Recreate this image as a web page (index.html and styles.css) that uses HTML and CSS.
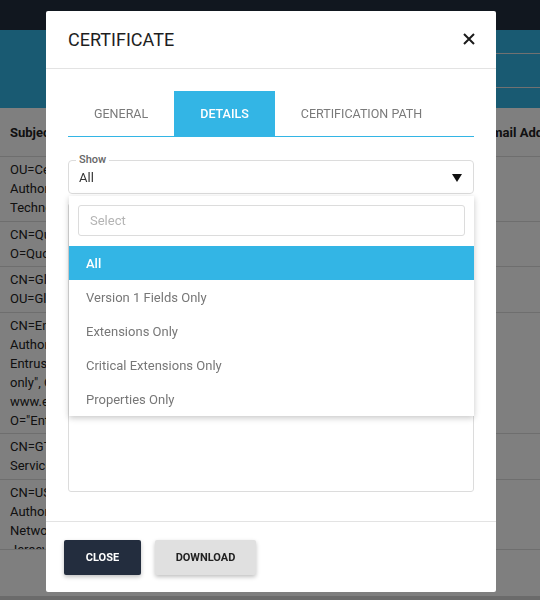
FILE: index.html
```html
<!DOCTYPE html>
<html lang="en">
<head>
	<meta charset="UTF-8">
	<meta name="viewport" content="width=device-width, initial-scale=1.0">
	<title>Certificates</title>
	<link rel="stylesheet" href="styles.css">
</head>
<body>
	<header class="topbar"></header>

	<section class="banner">
		<div class="banner-search"></div>
	</section>

	<div class="grid-wrap">
		<table class="cert-table">
			<colgroup>
				<col class="col-subject">
				<col class="col-issuer">
				<col class="col-expires">
				<col class="col-email">
			</colgroup>
			<thead>
				<tr>
					<th>Subject</th>
					<th>Issuer</th>
					<th>Expires</th>
					<th>Email Address</th>
				</tr>
			</thead>
			<tbody>
				<tr>
					<td>OU=Certum Certification<br>Authority, O=Unizeto<br>Technologies S.A., C=PL</td>
					<td>Certum CA</td>
					<td>2029-06-11</td>
					<td></td>
				</tr>
				<tr>
					<td>CN=QuoVadis Root CA 2,<br>O=QuoVadis Limited, C=BM</td>
					<td>QuoVadis</td>
					<td>2031-11-24</td>
					<td></td>
				</tr>
				<tr>
					<td>CN=GlobalSign, O=GlobalSign,<br>OU=GlobalSign Root CA - R3</td>
					<td>GlobalSign</td>
					<td>2029-03-18</td>
					<td></td>
				</tr>
				<tr>
					<td>CN=Entrust Root Certification<br>Authority - G2, OU="(c) 2009<br>Entrust, Inc. - for authorized use<br>only", OU="See<br>www.entrust.net/legal-terms",<br>O="Entrust, Inc.", C=US</td>
					<td>Entrust</td>
					<td>2030-12-07</td>
					<td></td>
				</tr>
				<tr>
					<td>CN=GTS Root R1, O=Google Trust<br>Services LLC, C=US</td>
					<td>Google Trust</td>
					<td>2036-06-22</td>
					<td></td>
				</tr>
				<tr>
					<td>CN=USERTrust RSA Certification<br>Authority, O=The USERTRUST<br>Network, L=Jersey City, ST=New<br>Jersey, C=US</td>
					<td>USERTrust</td>
					<td>2038-01-18</td>
					<td></td>
				</tr>
			</tbody>
		</table>
	</div>
	<div class="grid-foot"></div>
	<div class="hscroll"></div>

	<div class="backdrop"></div>

	<div class="modal">
		<div class="modal-head">
			<h2 class="modal-title">CERTIFICATE</h2>
			<button class="modal-close" type="button" aria-label="Close">
				<svg viewBox="0 0 12 12" width="12" height="12">
					<path d="M1 1 L11 11 M11 1 L1 11" stroke="#1b1b1b" stroke-width="2" fill="none"/>
				</svg>
			</button>
		</div>

		<div class="modal-body">
			<div class="tabs">
				<div class="tab">GENERAL</div>
				<div class="tab active">DETAILS</div>
				<div class="tab">CERTIFICATION PATH</div>
			</div>

			<div class="field">
				<span class="field-label">Show</span>
				<span class="field-value">All</span>
				<svg class="field-arrow" viewBox="0 0 10 8" width="10" height="8">
					<polygon points="0,0 10,0 5,8" fill="#111"/>
				</svg>
			</div>

			<div class="details-box"></div>
		</div>

		<div class="modal-foot">
			<button class="btn btn-dark" type="button">CLOSE</button>
			<button class="btn btn-light" type="button">DOWNLOAD</button>
		</div>

		<!-- open dropdown of the Show select -->
		<div class="dropdown">
			<div class="dropdown-search">Select</div>
			<ul class="options">
				<li class="option selected">All</li>
				<li class="option">Version 1 Fields Only</li>
				<li class="option">Extensions Only</li>
				<li class="option">Critical Extensions Only</li>
				<li class="option">Properties Only</li>
			</ul>
		</div>
	</div>
</body>
</html>
```

FILE: styles.css
```css
body{
	margin: 0;
	font-family: Roboto, "Liberation Sans", Arial, sans-serif;
	background: #fff;
	color: #222;
	overflow: hidden;
}

.topbar{
	height: 30px;
	background-color: #232f3e;
}

.banner{
	height: 78px;
	background-color: #33b5e5;
	display: flex;
	justify-content: flex-end;
	box-sizing: border-box;
	padding-top: 23px;
}

.banner-search{
	width: 230px;
	height: 35px;
	box-sizing: border-box;
	border-top: 1px solid #e2e2e2;
	border-bottom: 1px solid #e2e2e2;
}

.grid-wrap{
	height: 441px;
	overflow: hidden;
}

.cert-table{
	width: 640px;
	table-layout: fixed;
	border-collapse: collapse;
	font-size: 13px;
	line-height: 19px;
}

.col-subject{ width: 160px; }
.col-issuer{ width: 150px; }
.col-expires{ width: 164px; }
.col-email{ width: 166px; }

.cert-table th{
	height: 48px;
	padding: 0 10px;
	text-align: left;
	font-weight: bold;
	white-space: nowrap;
	border-bottom: 1px solid #dcdcdc;
}

.cert-table td{
	padding: 3px 10px 3.5px;
	vertical-align: top;
	white-space: nowrap;
	overflow: hidden;
	border-bottom: 1px solid #dcdcdc;
}

.grid-foot{
	height: 47px;
	border-top: 1px solid #dcdcdc;
	box-sizing: border-box;
}

.hscroll{
	height: 4px;
	background-color: #d6d6d6;
}

.backdrop{
	position: fixed;
	inset: 0;
	background: rgba(0, 0, 0, 0.5);
}

/* modal */
.modal{
	position: fixed;
	left: 46px;
	top: 11px;
	width: 450px;
	height: 581px;
	background: #fff;
	border-radius: 2px;
	display: flex;
	flex-direction: column;
}

.modal-head{
	height: 58px;
	box-sizing: border-box;
	border-bottom: 1px solid #e3e3e3;
	display: flex;
	align-items: center;
	justify-content: space-between;
	padding: 0 22px;
}

.modal-title{
	margin: 0;
	font-size: 18px;
	font-weight: 400;
	color: #1e1e1e;
}

.modal-close{
	border: none;
	background: none;
	padding: 0;
	margin-right: -1px;
	margin-top: -2px;
	display: flex;
}

.modal-body{
	flex: 1;
	padding: 22px 22px 29px;
	display: flex;
	flex-direction: column;
}

.tabs{
	display: flex;
	height: 46px;
	box-sizing: border-box;
	border-bottom: 1px solid #33b5e5;
}

.tab{
	padding: 0 26px;
	display: flex;
	align-items: center;
	font-size: 12.5px;
	color: #7a7a7a;
}

.tab.active{
	background-color: #33b5e5;
	color: #fff;
	font-weight: 500;
}

.field{
	position: relative;
	margin-top: 23px;
	height: 34px;
	box-sizing: border-box;
	border: 1px solid #dcdcdc;
	border-radius: 4px;
	display: flex;
	align-items: center;
	padding: 0 10px;
}

.field-label{
	position: absolute;
	top: -8px;
	left: 7px;
	padding: 0 3px;
	background: #fff;
	font-size: 11px;
	line-height: 14px;
	font-weight: 500;
	color: #666;
}

.field-value{
	flex: 1;
	font-size: 13px;
	color: #333;
}

.field-arrow{
	margin-right: 1px;
	margin-top: 1px;
}

.details-box{
	flex: 1;
	margin-top: 9px;
	border: 1px solid #dcdcdc;
	border-radius: 3px;
}

.modal-foot{
	height: 71px;
	box-sizing: border-box;
	border-top: 1px solid #e3e3e3;
	padding: 18px 18px 0;
	display: flex;
	gap: 14px;
	align-items: flex-start;
}

.btn{
	height: 35px;
	border: none;
	border-radius: 2px;
	font-family: inherit;
	font-size: 11px;
	font-weight: bold;
	box-shadow: 0 2px 4px rgba(0, 0, 0, 0.25);
}

.btn-dark{
	width: 77px;
	background-color: #232d3e;
	color: #fff;
}

.btn-light{
	width: 101px;
	background-color: #e0e0e0;
	color: #222;
}

.dropdown{
	position: absolute;
	left: 23px;
	top: 185px;
	width: 405px;
	background: #fff;
	box-shadow: 0 2px 6px rgba(0, 0, 0, 0.22);
	padding-top: 9px;
}

.dropdown-search{
	margin: 0 9px 10px;
	height: 31px;
	box-sizing: border-box;
	border: 1px solid #dcdcdc;
	border-radius: 3px;
	padding-left: 11px;
	display: flex;
	align-items: center;
	font-size: 13px;
	color: #b4b4b4;
}

.options{
	list-style: none;
	margin: 0;
	padding: 0;
}

.option{
	height: 34px;
	display: flex;
	align-items: center;
	padding-left: 17px;
	font-size: 13px;
	color: #777;
}

.option.selected{
	background-color: #33b5e5;
	color: #fff;
	font-weight: 500;
}
```
